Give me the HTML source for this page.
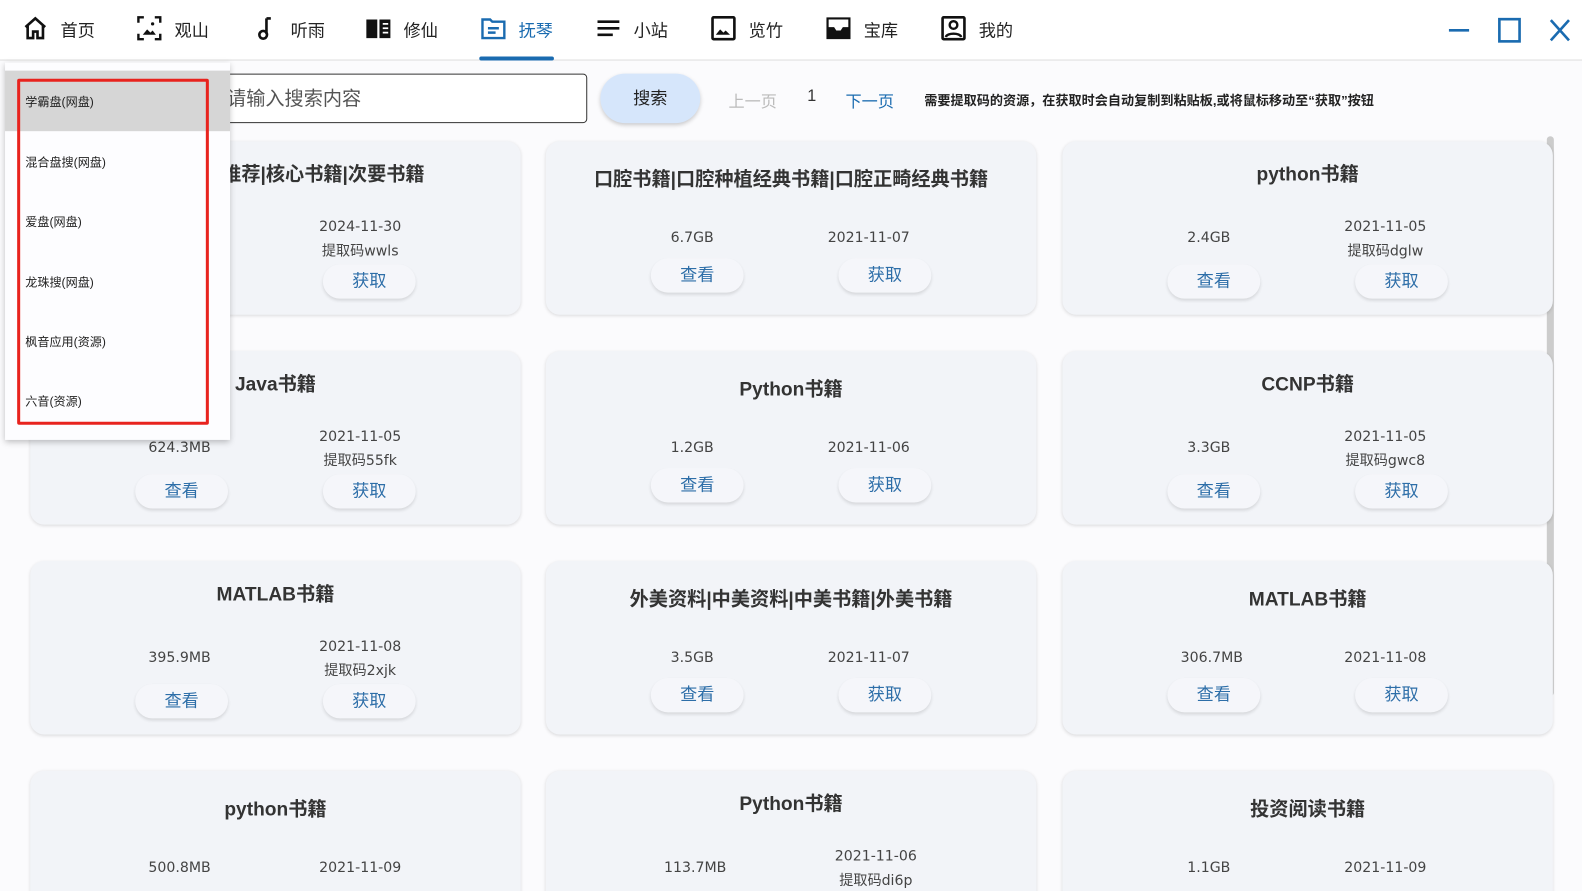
<!DOCTYPE html>
<html><head><meta charset="utf-8"><style>
*{margin:0;padding:0;box-sizing:border-box}
html,body{width:1582px;height:891px;overflow:hidden}
body{background:#fbfbfd;font-family:"Liberation Sans","Noto Sans CJK SC",sans-serif;position:relative;color:#333}
#w{position:absolute;left:0;top:0;width:1568px;height:883px;transform:scale(1.009);transform-origin:0 0;overflow:hidden}
.top{position:absolute;left:0;top:0;width:1568px;height:60px;background:#fff;border-bottom:1px solid #ddd}
.nav{position:absolute;top:15px;height:26px;display:flex;align-items:center;font-size:17px;color:#222}
.nav svg{width:26px;height:26px;margin-right:12px}
.act{color:#1a6bb0}
.ul{position:absolute;left:475px;top:56px;width:74px;height:4px;background:#1a6bb0;border-radius:2px}
.card{position:absolute;width:486px;height:172px;background:#f2f4f8;border-radius:14px;box-shadow:0 1px 3px rgba(0,0,0,.12)}
.t{position:absolute;left:0;width:100%;text-align:center;font-size:19px;font-weight:bold;color:#333}
.s{position:absolute;width:160px;text-align:center;font-size:14px;color:#444;font-family:"DejaVu Sans","Noto Sans CJK SC",sans-serif}
.b{position:absolute;width:92px;height:34px;border-radius:17px;background:#f5f6fa;box-shadow:0 2px 3px rgba(0,0,0,.12);text-align:center;line-height:34px;font-size:17px;color:#2d6ea8}
</style></head><body><div id="w">
<div class="top">
<div class="nav" style="left:22px"><svg viewBox="0 0 24 24"><path d="M3 11L12 3l9 8M5 9v12h5v-6h4v6h5V9" fill="none" stroke="#111" stroke-width="2.4"/></svg>首页</div>
<div class="nav" style="left:135px"><svg viewBox="0 0 24 24"><path d="M2 7V2h5M17 2h5v5M22 17v5h-5M7 22H2v-5" fill="none" stroke="#111" stroke-width="2.2"/><path d="M6 18l4-5 3 3 2-2 3 4z" fill="#111"/><circle cx="15" cy="8" r="1.5" fill="#111"/></svg>观山</div>
<div class="nav" style="left:250px"><svg viewBox="0 0 24 24"><path d="M13 3v14" stroke="#111" stroke-width="2.4"/><circle cx="10" cy="18" r="3.5" fill="none" stroke="#111" stroke-width="2.4"/><path d="M13 3h4" stroke="#111" stroke-width="2.4"/></svg>听雨</div>
<div class="nav" style="left:362px"><svg viewBox="0 0 24 24"><path d="M1 4h10v17H1zM13 4h10v17H13z" fill="#111"/><path d="M16 8h5M16 12h5M16 16h5" stroke="#fff" stroke-width="1.6"/></svg>修仙</div>
<div class="nav act" style="left:476px"><svg viewBox="0 0 24 24"><path d="M2 4h7l2 2h11v15H2z" fill="none" stroke="#1a6bb0" stroke-width="2.2"/><path d="M7 12h10M7 16h7" stroke="#1a6bb0" stroke-width="2.2"/></svg>抚琴</div>
<div class="nav" style="left:590px"><svg viewBox="0 0 24 24"><path d="M2 6h20M2 12h20M2 18h14" stroke="#111" stroke-width="2.4"/></svg>小站</div>
<div class="nav" style="left:704px"><svg viewBox="0 0 24 24"><rect x="2" y="2" width="20" height="20" rx="1" fill="none" stroke="#111" stroke-width="2.4"/><path d="M5 18l4-5 3 3 2-2 4 4z" fill="#111"/></svg>览竹</div>
<div class="nav" style="left:818px"><svg viewBox="0 0 24 24"><path d="M1 2h22v20H1z" fill="#111"/><path d="M3 4h18v7h-5l-2 3h-4l-2-3H3z" fill="#fff"/></svg>宝库</div>
<div class="nav" style="left:932px"><svg viewBox="0 0 24 24"><rect x="2" y="2" width="20" height="20" rx="1" fill="none" stroke="#111" stroke-width="2.4"/><circle cx="12" cy="9" r="3.5" fill="none" stroke="#111" stroke-width="2.2"/><path d="M5 20c1-4 13-4 14 0" fill="none" stroke="#111" stroke-width="2.2"/></svg>我的</div>
<div class="ul"></div>
<svg style="position:absolute;left:1434px;top:18px" width="24" height="24"><path d="M2 12h20" stroke="#1a6bb0" stroke-width="2.6"/></svg>
<svg style="position:absolute;left:1484px;top:17px" width="24" height="26"><rect x="2" y="2" width="20" height="22" fill="none" stroke="#1a6bb0" stroke-width="2.6"/></svg>
<svg style="position:absolute;left:1535px;top:18px" width="22" height="24"><path d="M2 2l18 20M20 2L2 22" stroke="#1a6bb0" stroke-width="2.6"/></svg>
</div>

<div style="position:absolute;left:150px;top:73px;width:432px;height:49px;border:1.5px solid #333;border-radius:4px;background:#fff;font-size:19px;color:#555;line-height:50px;padding-left:74px">请输入搜索内容</div>
<div style="position:absolute;left:595px;top:73px;width:99px;height:49px;border-radius:25px;background:#d6e6fb;box-shadow:0 2px 4px rgba(0,0,0,.2);text-align:center;line-height:49px;font-size:17px;color:#222">搜索</div>
<div style="position:absolute;left:722px;top:87px;font-size:16px;color:#bbb">上一页</div>
<div style="position:absolute;left:800px;top:87px;font-size:16px;color:#333">1</div>
<div style="position:absolute;left:838px;top:87px;font-size:16px;color:#1a6bb0">下一页</div>
<div style="position:absolute;left:916px;top:89px;font-size:13px;color:#222;font-weight:bold">需要提取码的资源，在获取时会自动复制到粘贴板,或将鼠标移动至“获取”按钮</div>
<div style="position:absolute;left:1533px;top:135px;width:7px;height:555px;border-radius:4px;background:#ccc"></div>

<div class="card" style="left:30px;top:140px"><div class="t" style="top:18px">计算机书籍推荐|核心书籍|次要书籍</div><div class="s" style="left:68px;top:88px">324.1MB</div><div class="s" style="left:247px;top:77px">2024-11-30</div><div class="s" style="left:247px;top:98px">提取码wwls</div><div class="b" style="left:104px;top:122px">查看</div><div class="b" style="left:290px;top:122px">获取</div></div>
<div class="card" style="left:541px;top:140px"><div class="t" style="top:23px">口腔书籍|口腔种植经典书籍|口腔正畸经典书籍</div><div class="s" style="left:65px;top:88px">6.7GB</div><div class="s" style="left:240px;top:88px">2021-11-07</div><div class="b" style="left:104px;top:116px">查看</div><div class="b" style="left:290px;top:116px">获取</div></div>
<div class="card" style="left:1053px;top:140px"><div class="t" style="top:18px">python书籍</div><div class="s" style="left:65px;top:88px">2.4GB</div><div class="s" style="left:240px;top:77px">2021-11-05</div><div class="s" style="left:240px;top:98px">提取码dglw</div><div class="b" style="left:104px;top:122px">查看</div><div class="b" style="left:290px;top:122px">获取</div></div>
<div class="card" style="left:30px;top:348px"><div class="t" style="top:18px">Java书籍</div><div class="s" style="left:68px;top:88px">624.3MB</div><div class="s" style="left:247px;top:77px">2021-11-05</div><div class="s" style="left:247px;top:98px">提取码55fk</div><div class="b" style="left:104px;top:122px">查看</div><div class="b" style="left:290px;top:122px">获取</div></div>
<div class="card" style="left:541px;top:348px"><div class="t" style="top:23px">Python书籍</div><div class="s" style="left:65px;top:88px">1.2GB</div><div class="s" style="left:240px;top:88px">2021-11-06</div><div class="b" style="left:104px;top:116px">查看</div><div class="b" style="left:290px;top:116px">获取</div></div>
<div class="card" style="left:1053px;top:348px"><div class="t" style="top:18px">CCNP书籍</div><div class="s" style="left:65px;top:88px">3.3GB</div><div class="s" style="left:240px;top:77px">2021-11-05</div><div class="s" style="left:240px;top:98px">提取码gwc8</div><div class="b" style="left:104px;top:122px">查看</div><div class="b" style="left:290px;top:122px">获取</div></div>
<div class="card" style="left:30px;top:556px"><div class="t" style="top:18px">MATLAB书籍</div><div class="s" style="left:68px;top:88px">395.9MB</div><div class="s" style="left:247px;top:77px">2021-11-08</div><div class="s" style="left:247px;top:98px">提取码2xjk</div><div class="b" style="left:104px;top:122px">查看</div><div class="b" style="left:290px;top:122px">获取</div></div>
<div class="card" style="left:541px;top:556px"><div class="t" style="top:23px">外美资料|中美资料|中美书籍|外美书籍</div><div class="s" style="left:65px;top:88px">3.5GB</div><div class="s" style="left:240px;top:88px">2021-11-07</div><div class="b" style="left:104px;top:116px">查看</div><div class="b" style="left:290px;top:116px">获取</div></div>
<div class="card" style="left:1053px;top:556px"><div class="t" style="top:23px">MATLAB书籍</div><div class="s" style="left:68px;top:88px">306.7MB</div><div class="s" style="left:240px;top:88px">2021-11-08</div><div class="b" style="left:104px;top:116px">查看</div><div class="b" style="left:290px;top:116px">获取</div></div>
<div class="card" style="left:30px;top:764px"><div class="t" style="top:23px">python书籍</div><div class="s" style="left:68px;top:88px">500.8MB</div><div class="s" style="left:247px;top:88px">2021-11-09</div></div>
<div class="card" style="left:541px;top:764px"><div class="t" style="top:18px">Python书籍</div><div class="s" style="left:68px;top:88px">113.7MB</div><div class="s" style="left:247px;top:77px">2021-11-06</div><div class="s" style="left:247px;top:98px">提取码di6p</div></div>
<div class="card" style="left:1053px;top:764px"><div class="t" style="top:23px">投资阅读书籍</div><div class="s" style="left:65px;top:88px">1.1GB</div><div class="s" style="left:240px;top:88px">2021-11-09</div></div>

<div style="position:absolute;left:5px;top:62px;width:223px;height:374px;background:#fdfdff;box-shadow:0 2px 6px rgba(0,0,0,.25)">
<div style="position:absolute;left:0;top:8px;width:223px;height:60px;background:#d6d6d6"></div>
<div style="position:absolute;left:12px;top:16px;width:190px;height:343px;border:3px solid #e8231e;border-radius:2px"></div>
<div style="position:absolute;left:20px;top:31px;font-size:12px;line-height:16px;color:#222">学霸盘(网盘)</div>
<div style="position:absolute;left:20px;top:91px;font-size:12px;line-height:16px;color:#222">混合盘搜(网盘)</div>
<div style="position:absolute;left:20px;top:150px;font-size:12px;line-height:16px;color:#222">爱盘(网盘)</div>
<div style="position:absolute;left:20px;top:210px;font-size:12px;line-height:16px;color:#222">龙珠搜(网盘)</div>
<div style="position:absolute;left:20px;top:269px;font-size:12px;line-height:16px;color:#222">枫音应用(资源)</div>
<div style="position:absolute;left:20px;top:328px;font-size:12px;line-height:16px;color:#222">六音(资源)</div>
</div>
</div></body></html>
